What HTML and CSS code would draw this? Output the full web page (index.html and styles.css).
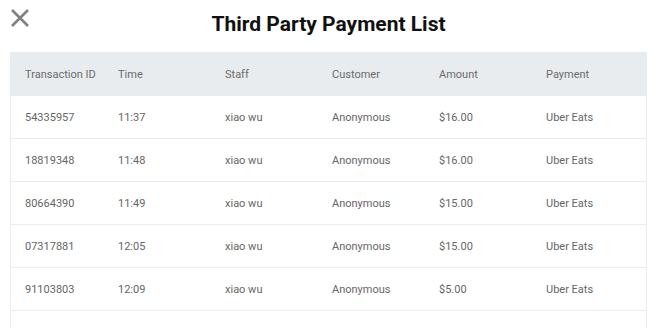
FILE: index.html
```html
<!DOCTYPE html>
<html lang="en">
<head>
  <meta charset="UTF-8" />
  <meta name="viewport" content="width=device-width, initial-scale=1.0" />
  <title>Third Party Payment List</title>
  <link rel="stylesheet" href="styles.css">
</head>
<body>
  <div class="panel">
    <div class="top-bar">
      <span class="close-btn">
        <svg width="20" height="20" viewBox="0 0 20 20">
          <path d="M2 2 L18 18 M18 2 L2 18" stroke="#808080" stroke-width="2.6" fill="none" />
        </svg>
      </span>
      <h2>Third Party Payment List</h2>
    </div>

    <div class="table">
      <div class="row head">
        <div>Transaction ID</div>
        <div>Time</div>
        <div>Staff</div>
        <div>Customer</div>
        <div>Amount</div>
        <div>Payment</div>
      </div>
      <div class="row">
        <div>54335957</div><div>11:37</div><div>xiao wu</div><div>Anonymous</div><div>$16.00</div><div>Uber Eats</div>
      </div>
      <div class="row">
        <div>18819348</div><div>11:48</div><div>xiao wu</div><div>Anonymous</div><div>$16.00</div><div>Uber Eats</div>
      </div>
      <div class="row">
        <div>80664390</div><div>11:49</div><div>xiao wu</div><div>Anonymous</div><div>$15.00</div><div>Uber Eats</div>
      </div>
      <div class="row">
        <div>07317881</div><div>12:05</div><div>xiao wu</div><div>Anonymous</div><div>$15.00</div><div>Uber Eats</div>
      </div>
      <div class="row">
        <div>91103803</div><div>12:09</div><div>xiao wu</div><div>Anonymous</div><div>$5.00</div><div>Uber Eats</div>
      </div>
      <div class="row">
        <div></div><div></div><div></div><div></div><div></div><div></div>
      </div>
    </div>
  </div>
</body>
</html>
```

FILE: styles.css
```css
* {
  margin: 0;
  padding: 0;
  box-sizing: border-box;
  font-family: Roboto, 'Liberation Sans', sans-serif;
}

html, body {
  background: #ffffff;
  overflow: hidden;
}

.panel {
  padding: 0 9px 0 10px;
}

.top-bar {
  position: relative;
  height: 52px;
  display: flex;
  align-items: center;
  justify-content: center;
}

.close-btn {
  position: absolute;
  left: 0;
  top: 8px;
  width: 20px;
  height: 20px;
  display: block;
}

.close-btn svg {
  display: block;
}

h2 {
  font-size: 21px;
  font-weight: 700;
  color: #111;
  margin-top: -5px;
}

.table {
  border-left: 1px solid #ececec;
  border-right: 1px solid #ececec;
}

.row {
  display: grid;
  grid-template-columns: 93px 107px 107px 107px 107px 1fr;
  height: 43px;
  padding-top: 1px;
  align-items: center;
  font-size: 11px;
  color: #666;
  border-bottom: 1px solid #ececec;
}

.row > div {
  padding-left: 14px;
}

.row.head {
  height: 44px;
  padding-top: 0;
  background: #e9ecef;
  border-bottom: none;
  color: #6b6b6b;
}
```
